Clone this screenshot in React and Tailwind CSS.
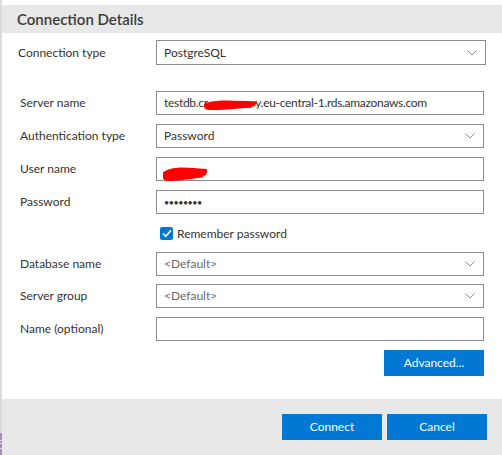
import { useState } from "react";

const font = { fontFamily: '"Segoe UI", Lato, "Noto Sans", sans-serif' };

function Chevron() {
  return (
    <svg width="10" height="6" viewBox="0 0 10 6" className="shrink-0">
      <path d="M0.5 0.5 L5 5 L9.5 0.5" fill="none" stroke="#8c8c8c" strokeWidth="1" />
    </svg>
  );
}

function Scribble({ className, w, h }) {
  return (
    <svg width={w} height={h} viewBox={`0 0 ${w} ${h}`} className={className}>
      <path
        d={`M1 ${h * 0.55} C ${w * 0.2} ${h * 0.1}, ${w * 0.45} ${h * 0.2}, ${w - 2} ${h * 0.3} M2 ${h * 0.7} C ${w * 0.3} ${h * 0.35}, ${w * 0.6} ${h * 0.6}, ${w - 3} ${h * 0.45} M3 ${h * 0.8} C ${w * 0.35} ${h * 0.9}, ${w * 0.7} ${h * 0.6}, ${w - 6} ${h * 0.6}`}
        fill="none"
        stroke="#ff0000"
        strokeWidth={h * 0.35}
        strokeLinecap="round"
      />
    </svg>
  );
}

function Row({ label, children, className = "", labelClass = "pl-[18px]" }) {
  return (
    <div className={`flex items-center ${className}`}>
      <div className={`w-[154px] text-[12px] text-[#333] ${labelClass}`}>{label}</div>
      {children}
    </div>
  );
}

function Field({ children, select, placeholder, className = "w-[328px]" }) {
  return (
    <div
      className={`relative h-[24px] border border-[#8a8a8a] bg-white flex items-center pl-[7px] pr-[8px] text-[12px] ${
        placeholder ? "text-[#6b6b6b]" : "text-[#333]"
      } ${className}`}
    >
      <div className="flex-1 whitespace-nowrap overflow-hidden">{children}</div>
      {select && <Chevron />}
    </div>
  );
}

export default function App() {
  const [remember, setRemember] = useState(true);

  return (
    <div className="w-[502px] h-[455px] flex bg-white overflow-hidden" style={font}>
      <div className="w-[2px] flex flex-col bg-[#dcdcdc]">
        <div className="flex-1" />
        <div className="h-[7px] bg-[#a98bbd]" />
        <div className="h-[1px]" />
        <div className="h-[2px] bg-[#a98bbd]" />
        <div className="h-[1px]" />
        <div className="h-[4px] bg-[#a98bbd]" />
        <div className="h-[1px]" />
        <div className="h-[6px] bg-[#a98bbd]" />
      </div>

      <div className="flex-1 flex flex-col">
        <div className="h-[5px]" />
        <div className="h-[28px] bg-[#e8e8e8] flex items-center pl-[15px] text-[15px] font-semibold text-[#3c3c3c]">
          Connection Details
        </div>

        <div className="flex-1 flex flex-col pt-[7px]">
          <Row label="Connection type" labelClass="pl-[16px]">
            <Field select className="w-[330px] h-[25px]">PostgreSQL</Field>
          </Row>

          <Row label="Server name" className="mt-[26px]">
            <Field>
              <span className="tracking-[-0.3px]">
                testdb.cr
                <span className="text-transparent">ufqzwxkil</span>
                y.eu-central-1.rds.amazonaws.com
              </span>
              <Scribble className="absolute left-[47px] top-[8px]" w={53} h={10} />
            </Field>
          </Row>

          <Row label="Authentication type" className="mt-[9px]">
            <Field select>Password</Field>
          </Row>

          <Row label="User name" className="mt-[9px]">
            <Field>
              <span className="text-transparent">admin</span>
              <Scribble className="absolute left-[6px] top-[9px]" w={44} h={14} />
            </Field>
          </Row>

          <Row label="Password" className="mt-[9px]">
            <Field>
              <span className="text-[9px] tracking-[-0.5px]">••••••••</span>
            </Field>
          </Row>

          <div className="flex items-center mt-[13px] pl-[158px] h-[13px]">
            <button
              onClick={() => setRemember(!remember)}
              className="w-[13px] h-[13px] rounded-[2px] bg-[#0078d4] flex items-center justify-center"
            >
              {remember && (
                <svg width="10" height="9" viewBox="0 0 10 9">
                  <path d="M1 4.5 L3.8 7.3 L9 1.2" fill="none" stroke="white" strokeWidth="1.6" />
                </svg>
              )}
            </button>
            <span className="ml-[4px] text-[12px] text-[#333]">Remember password</span>
          </div>

          <Row label="Database name" className="mt-[12px]">
            <Field select placeholder>&lt;Default&gt;</Field>
          </Row>

          <Row label="Server group" className="mt-[8px]">
            <Field select placeholder>&lt;Default&gt;</Field>
          </Row>

          <Row label="Name (optional)" className="mt-[9px]">
            <Field />
          </Row>

          <div className="flex justify-end pr-[18px] mt-[9px]">
            <button className="w-[100px] h-[26px] bg-[#0078d4] text-white text-[12px]">Advanced...</button>
          </div>
        </div>

        <div className="h-[56px] bg-[#e8e8e8] flex justify-end items-start pt-[15px] pr-[15px] gap-[5px]">
          <button className="w-[100px] h-[26px] bg-[#0078d4] text-white text-[12px]">Connect</button>
          <button className="w-[100px] h-[26px] bg-[#0078d4] text-white text-[12px]">Cancel</button>
        </div>
      </div>
    </div>
  );
}
